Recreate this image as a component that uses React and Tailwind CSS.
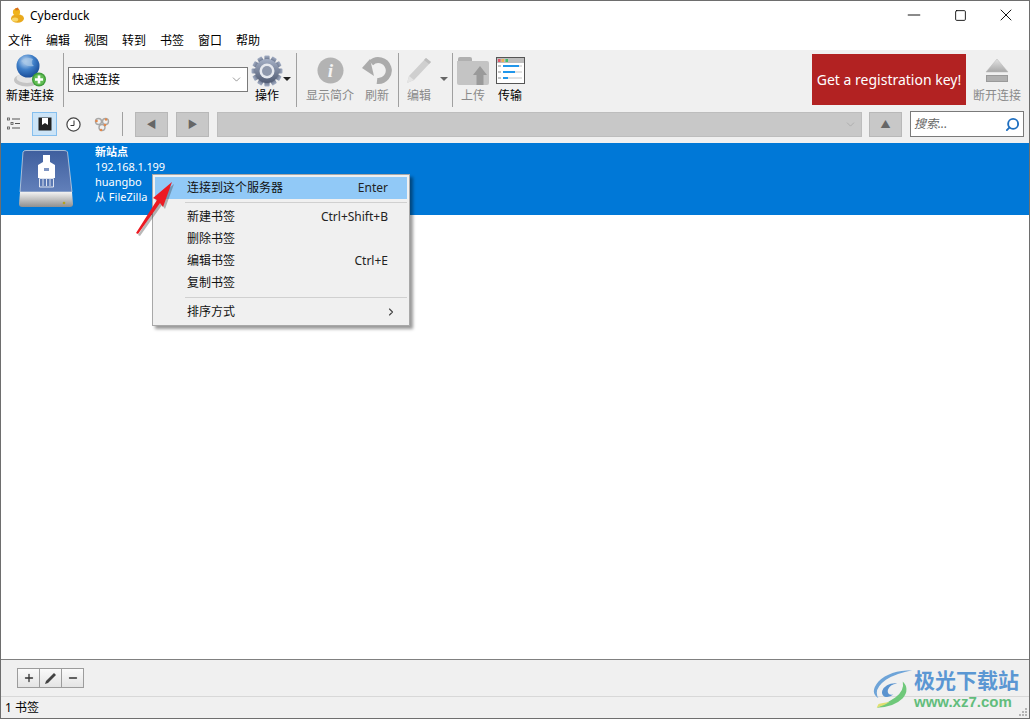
import { ChevronDown, ChevronRight, Minus, Plus, Search, Square, X } from "lucide-react";

const menus = ["文件", "编辑", "视图", "转到", "书签", "窗口", "帮助"];
const ui = "font-['Noto_Sans','Noto_Sans_CJK_SC',sans-serif]";

function Sep({ className = "" }) {
  return <div className={`h-[54px] w-px shrink-0 bg-[#a0a0a0] ${className}`} />;
}

function Duck() {
  return (
    <svg width="16" height="16" viewBox="0 0 16 16">
      <ellipse cx="8.5" cy="11.5" rx="6.5" ry="4.2" fill="#e9a91c" />
      <circle cx="7.5" cy="5" r="3.6" fill="#f0b41c" />
      <path d="M6 1.5 L9 0.5 L10 3 L6.5 3.5 Z" fill="#d9701c" />
      <ellipse cx="6" cy="12.5" rx="3.2" ry="2" fill="#f8d768" />
    </svg>
  );
}

function GlobeIcon() {
  return (
    <svg width="34" height="34" viewBox="0 0 34 34">
      <defs>
        <radialGradient id="gl" cx="0.4" cy="0.3" r="0.8">
          <stop offset="0" stopColor="#c8dff5" />
          <stop offset="0.45" stopColor="#3f7fc8" />
          <stop offset="1" stopColor="#0f3f8c" />
        </radialGradient>
      </defs>
      <ellipse cx="14" cy="26" rx="13" ry="6.5" fill="#c4c4c4" />
      <ellipse cx="14" cy="24" rx="10.5" ry="5" fill="#e4e4e4" />
      <circle cx="15" cy="12" r="11.5" fill="url(#gl)" />
      <path d="M8 7 Q14 2 20 5 Q17 9 21 12 Q14 13 12 10 Q10 8 8 7Z" fill="#a6c6e6" opacity="0.75" />
      <circle cx="26" cy="25.5" r="7" fill="#3f9c3a" />
      <circle cx="26" cy="25.5" r="5.6" fill="#62bd54" />
      <path d="M24.7 21.5h2.6v2.7H30v2.6h-2.7v2.7h-2.6v-2.7H22v-2.6h2.7z" fill="#fff" />
    </svg>
  );
}

function GearIcon() {
  const teeth = [0, 30, 60, 90, 120, 150, 180, 210, 240, 270, 300, 330];
  return (
    <svg width="32" height="32" viewBox="0 0 32 32">
      <defs>
        <linearGradient id="gr" x1="0" y1="0" x2="0" y2="1">
          <stop offset="0" stopColor="#a5b0c6" />
          <stop offset="1" stopColor="#4f5a72" />
        </linearGradient>
      </defs>
      {teeth.map((a) => (
        <rect key={a} x="13.4" y="0.5" width="5.2" height="6" rx="1" fill="url(#gr)" transform={`rotate(${a} 16 16)`} />
      ))}
      <circle cx="16" cy="16" r="12" fill="url(#gr)" />
      <circle cx="16" cy="16" r="7.5" fill="#e6e9ef" />
      <circle cx="16" cy="16" r="5" fill="#8e98ac" />
    </svg>
  );
}

function InfoIcon() {
  return (
    <svg width="27" height="27" viewBox="0 0 28 28">
      <circle cx="14" cy="14" r="13.5" fill="#b3b3b3" />
      <text x="14" y="21" textAnchor="middle" fontSize="20" fontStyle="italic" fontWeight="700" fontFamily="Liberation Serif, serif" fill="#f4f4f4">i</text>
    </svg>
  );
}

function RefreshIcon() {
  return (
    <svg width="30" height="29" viewBox="0 0 30 29" fill="none">
      <path d="M9 7 A10.5 10.5 0 1 1 15 25" stroke="#ababab" strokeWidth="6" />
      <path d="M0 12 L8 3 L12 20 Z" fill="#ababab" />
    </svg>
  );
}

function PencilIcon() {
  return (
    <svg width="28" height="28" viewBox="0 0 28 28">
      <path d="M21 1 L26 5 L9 23 L2 26 L4 19 Z" fill="#cfcfcf" />
      <path d="M21 1 L26 5 L24 7 L19 3 Z" fill="#bdbdbd" />
      <path d="M4 19 L9 23 L2 26 Z" fill="#e4e4e4" />
    </svg>
  );
}

function UploadIcon() {
  return (
    <svg width="32" height="28" viewBox="0 0 32 28">
      <path d="M1 2 Q1 0 3 0 H13 Q15 0 15 2 V4 H1 Z" fill="#b0b0b0" />
      <path d="M0 4 H30 Q32 4 32 6 V26 Q32 28 30 28 H2 Q0 28 0 26 Z" fill="#c4c4c4" />
      <path d="M23 9 L30 18 H26.5 V28 H19.5 V18 H16 Z" fill="#9a9a9a" />
    </svg>
  );
}

function TransferIcon() {
  return (
    <svg width="29" height="27" viewBox="0 0 29 27">
      <rect x="0.5" y="0.5" width="28" height="26" fill="#fff" stroke="#555" />
      <rect x="1" y="1" width="27" height="5" fill="#bdbdbd" />
      <rect x="2" y="2" width="2.5" height="3" fill="#e0566a" />
      <rect x="5.5" y="2" width="2.5" height="3" fill="#f0ae55" />
      <rect x="9.5" y="2" width="2.5" height="3" fill="#3fc06a" />
      {[[8, 16], [14, 12], [20, 5]].map(([y, w]) => (
        <g key={y}>
          <rect x="2" y={y} width="3" height="2" fill="#c4c4c4" />
          <rect x="7" y={y} width="19" height="2" fill="#e2e2e2" />
          <rect x="7" y={y} width={w} height="2" fill="#2196ea" />
        </g>
      ))}
    </svg>
  );
}

function EjectIcon() {
  return (
    <svg width="24" height="26" viewBox="0 0 24 26">
      <defs>
        <linearGradient id="ej" x1="0" y1="0" x2="0" y2="1">
          <stop offset="0" stopColor="#e2e2e2" />
          <stop offset="1" stopColor="#a8a8a8" />
        </linearGradient>
      </defs>
      <path d="M12 1 L23 14 H1 Z" fill="url(#ej)" stroke="#b8b8b8" strokeWidth="0.5" />
      <rect x="1.5" y="17.5" width="21" height="6" fill="#b0b0b0" stroke="#9a9a9a" />
    </svg>
  );
}

function OutlineIcon() {
  return (
    <svg width="14" height="14" viewBox="0 0 14 14" fill="#555">
      <rect x="0.5" y="1" width="2" height="2" fill="none" stroke="#555" strokeWidth="0.8" />
      <rect x="4" y="5.5" width="2" height="2" fill="none" stroke="#555" strokeWidth="0.8" />
      <rect x="0.5" y="10" width="2" height="2" fill="none" stroke="#555" strokeWidth="0.8" />
      <rect x="5" y="1.5" width="8" height="1" />
      <rect x="8" y="6" width="5" height="1" />
      <rect x="5" y="10.5" width="8" height="1" />
    </svg>
  );
}

function BookmarkIcon() {
  return (
    <svg width="14" height="14" viewBox="0 0 14 14">
      <rect x="0.5" y="0.5" width="13" height="13" fill="#222" />
      <path d="M4 1 H10 V8 L7 6 L4 8 Z" fill="#fff" />
    </svg>
  );
}

function ClockIcon() {
  return (
    <svg width="15" height="15" viewBox="0 0 15 15">
      <circle cx="7.5" cy="7.5" r="6.6" fill="#fff" stroke="#444" strokeWidth="1.2" />
      <path d="M8 3.5 V8.5 H4.5" fill="none" stroke="#333" strokeWidth="1" />
    </svg>
  );
}

function BonjourIcon() {
  return (
    <svg width="16" height="15" viewBox="0 0 16 15" fill="none">
      <circle cx="4.5" cy="4.5" r="3" stroke="#a8a8a8" strokeWidth="1.4" />
      <circle cx="11.5" cy="4.5" r="3" stroke="#a8a8a8" strokeWidth="1.4" />
      <circle cx="8" cy="10.5" r="3" stroke="#a8a8a8" strokeWidth="1.4" />
      <circle cx="2.5" cy="4" r="1.3" fill="#e2884a" />
      <circle cx="12" cy="2.5" r="1.2" fill="#e2884a" />
      <circle cx="11" cy="8" r="1.3" fill="#e2884a" />
      <circle cx="7" cy="13" r="1.3" fill="#e2884a" />
    </svg>
  );
}

function DriveIcon() {
  return (
    <svg width="55" height="58" viewBox="0 0 55 58">
      <defs>
        <linearGradient id="dr" x1="0" y1="0" x2="0" y2="1">
          <stop offset="0" stopColor="#3f5f9e" />
          <stop offset="1" stopColor="#6280ba" />
        </linearGradient>
        <linearGradient id="ds" x1="0" y1="0" x2="0" y2="1">
          <stop offset="0" stopColor="#f2f2f2" />
          <stop offset="1" stopColor="#8f8f8f" />
        </linearGradient>
      </defs>
      <path d="M4 2 Q4.5 0.5 7 0.5 H45 Q48 0.5 48.5 2 L53 42 H1 Z" fill="url(#dr)" stroke="#c8d0de" strokeWidth="0.8" />
      <path d="M1 42 H53 L54 54 Q54 57 51 57 H3 Q0 57 0 54 Z" fill="url(#ds)" />
      <circle cx="45" cy="53" r="1.3" fill="#b5a21f" />
      <path d="M24 5 H31 V12 L36 15 V28 H19 V15 L24 12 Z" fill="#fff" />
      <rect x="25" y="18" width="5" height="3" fill="#7f95c2" />
      <path d="M20.5 28.5 H34.5 V37 H20.5 Z" fill="none" stroke="#fff" strokeWidth="0.8" />
      <path d="M24 29 V36 M27.5 29 V36 M31 29 V36" stroke="#fff" strokeWidth="0.8" />
    </svg>
  );
}

function ToolButton({ icon, label, muted = true, className = "" }) {
  return (
    <div className={`flex shrink-0 flex-col items-center ${className}`}>
      <div className="flex h-[35px] items-center justify-center">{icon}</div>
      <span className={`-mt-[1px] text-xs leading-[17px] whitespace-nowrap ${muted ? "text-[#8a8a8a]" : "text-black"}`}>{label}</span>
    </div>
  );
}

function Caret({ className = "" }) {
  return <div className={`h-0 w-0 border-x-[4px] border-t-[4px] border-x-transparent ${className}`} />;
}

function NavButton({ children }) {
  return (
    <div className="flex h-[25px] w-[33px] shrink-0 items-center justify-center border border-[#b8b8b8] bg-[#c8c8c8] text-[10px] text-[#666]">
      {children}
    </div>
  );
}

function MenuRow({ label, hint, active, arrow }) {
  return (
    <div className={`flex h-[22px] items-center justify-between pr-[19px] pl-[32px] text-xs text-[#111] ${active ? "bg-[#91c9f7]" : ""}`}>
      <span>{label}</span>
      {hint ? <span className="text-[#222]">{hint}</span> : null}
      {arrow ? <ChevronRight size={12} strokeWidth={2.2} className="-mr-[9px] text-[#444]" /> : null}
    </div>
  );
}

function ContextMenu() {
  return (
    <div className="absolute top-[173px] left-[151px] w-[258px] border border-[#a8a8a8] bg-[#f0f0f0] p-[2px] shadow-[3px_3px_3px_rgba(0,0,0,0.4)]">
      <MenuRow label="连接到这个服务器" hint="Enter" active />
      <div className="my-[3px] ml-[30px] h-px bg-[#d0d0d0]" />
      <MenuRow label="新建书签" hint="Ctrl+Shift+B" />
      <MenuRow label="删除书签" />
      <MenuRow label="编辑书签" hint="Ctrl+E" />
      <MenuRow label="复制书签" />
      <div className="my-[3px] ml-[30px] h-px bg-[#d0d0d0]" />
      <MenuRow label="排序方式" arrow />
    </div>
  );
}

function RedArrow() {
  return (
    <svg className="absolute top-[179px] left-[131px]" width="44" height="60" viewBox="0 0 44 60">
      <path d="M4 53 L25 20 L21 18 L40 2 L31 27 L28 23 L6 54 Z" fill="#333" opacity="0.35" transform="translate(2 2)" />
      <path d="M4 53 L25 20 L21 18 L40 2 L31 27 L28 23 L6 54 Z" fill="#ec1a22" />
    </svg>
  );
}

function Watermark() {
  return (
    <div className="absolute top-[667px] left-[870px] flex items-center">
      <svg width="43" height="42" viewBox="0 0 46 44" fill="none">
        <path d="M44 2 Q20 2 8 14 Q-2 26 8 32 Q2 22 16 12 Q28 5 44 2Z" fill="#6ea4d8" />
        <path d="M12 24 Q16 15 28 16 Q20 17 18 23 Q17 29 24 28 Q19 32 14 30 Q11 28 12 24Z" fill="#5a93cf" />
        <path d="M6 42 Q24 42 34 32 Q42 22 34 14 Q36 24 26 31 Q16 38 6 42Z" fill="#6fc87a" />
        <path d="M6 42 Q14 40 20 36 Q12 37 8 38Z" fill="#e0df70" />
      </svg>
      <div className="flex flex-col">
        <span className="text-[21px] leading-[25px] font-bold text-[#5b97d3]">极光下载站</span>
        <span className="font-['Liberation_Sans',sans-serif] text-[15px] leading-[17px] font-bold text-[#62bd7c]">www.xz7.com</span>
      </div>
    </div>
  );
}

function Grip() {
  const dots = [[7, 1], [4, 4], [7, 4], [1, 7], [4, 7], [7, 7]];
  return (
    <svg className="absolute right-[1px] bottom-[1px]" width="10" height="10" viewBox="0 0 10 10">
      {dots.map(([x, y]) => <rect key={`${x}-${y}`} x={x} y={y} width="2" height="2" fill="#b4b4b4" />)}
    </svg>
  );
}

export default function App() {
  return (
    <div className={`relative flex h-[719px] w-[1030px] flex-col overflow-hidden border border-[#6e6e6e] bg-white ${ui}`}>
      <div className="flex h-[28px] shrink-0 items-center bg-white pl-[8px]">
        <Duck />
        <span className="mt-[2px] ml-[5px] text-xs text-black">Cyberduck</span>
        <div className="ml-auto flex items-center text-black">
          <div className="flex h-[28px] w-[46px] items-center justify-center"><Minus size={20} strokeWidth={1.1} /></div>
          <div className="flex h-[28px] w-[46px] items-center justify-center"><Square size={13} strokeWidth={1.6} /></div>
          <div className="flex h-[28px] w-[46px] items-center justify-center"><X size={20} strokeWidth={1.1} /></div>
        </div>
      </div>

      <div className="flex h-[21px] shrink-0 items-center gap-[14px] bg-white pt-[2px] pl-[7px] text-xs text-black">
        {menus.map((m) => <span key={m}>{m}</span>)}
      </div>

      <div className="flex h-[61px] shrink-0 items-start bg-[#f0f0f0] pt-[3px] pr-[4px]">
        <ToolButton icon={<GlobeIcon />} label="新建连接" muted={false} className="w-[58px]" />
        <Sep className="ml-[4px]" />
        <div className="mt-[14px] ml-[4px] flex h-[25px] w-[180px] shrink-0 items-center justify-between border border-[#7a7a7a] bg-white pr-[4px] pl-[3px] text-xs text-black">
          快速连接
          <ChevronDown size={13} strokeWidth={1} className="text-[#444]" />
        </div>
        <div className="relative">
          <ToolButton icon={<GearIcon />} label="操作" muted={false} className="w-[38px]" />
          <Caret className="absolute top-[24px] -right-[5px] border-t-[#222]" />
        </div>
        <Sep className="ml-[10px]" />
        <ToolButton icon={<InfoIcon />} label="显示简介" className="w-[66px]" />
        <ToolButton icon={<RefreshIcon />} label="刷新" className="w-[28px]" />
        <Sep className="ml-[7px]" />
        <ToolButton icon={<PencilIcon />} label="编辑" className="w-[40px]" />
        <Caret className="mt-[24px] ml-[1px] border-t-[#666]" />
        <Sep className="ml-[4px]" />
        <ToolButton icon={<UploadIcon />} label="上传" className="w-[40px]" />
        <ToolButton icon={<TransferIcon />} label="传输" muted={false} className="w-[34px]" />
        <div className="mt-[1px] ml-auto flex h-[51px] w-[154px] items-center justify-center bg-[#b22222] text-sm whitespace-nowrap text-white">
          Get a registration key!
        </div>
        <ToolButton icon={<EjectIcon />} label="断开连接" className="ml-[3px] w-[56px]" />
      </div>

      <div className="flex h-[32px] shrink-0 items-center bg-[#f0f0f0] pr-[5px] pb-[6px]">
        <div className="ml-[6px] flex w-[14px] justify-center"><OutlineIcon /></div>
        <div className="ml-[11px] flex h-[24px] w-[25px] items-center justify-center border border-[#86bfee] bg-[#cce4f7]"><BookmarkIcon /></div>
        <div className="ml-[9px] flex w-[15px] justify-center"><ClockIcon /></div>
        <div className="ml-[13px] flex w-[16px] justify-center"><BonjourIcon /></div>
        <div className="mx-[12px] h-[24px] w-px bg-[#a0a0a0]" />
        <NavButton>◀</NavButton>
        <div className="w-[8px]" />
        <NavButton>▶</NavButton>
        <div className="ml-[8px] flex h-[25px] flex-1 items-center justify-end border border-[#bdbdbd] bg-[#c8c8c8] pr-[4px]">
          <ChevronDown size={13} strokeWidth={1} className="text-[#999]" />
        </div>
        <div className="ml-[7px]"><NavButton>▲</NavButton></div>
        <div className="ml-[8px] flex h-[26px] w-[114px] items-center justify-between border border-[#7a7a7a] bg-white pr-[3px] pl-[3px] text-xs text-[#666] italic">
          搜索...
          <Search size={15} strokeWidth={3} className="scale-x-[-1] text-[#1f6fc0]" />
        </div>
      </div>

      <div className="flex min-h-0 flex-1 flex-col bg-white">
        <div className="flex h-[72px] shrink-0 items-center bg-[#0078d7] pl-[18px] text-white">
          <DriveIcon />
          <div className="mb-[10px] ml-[21px] flex flex-col text-[11px] leading-[15px]">
            <span className="font-bold">新站点</span>
            <span className="tracking-[-0.15px]">192.168.1.199</span>
            <span>huangbo</span>
            <span>从 FileZilla</span>
          </div>
        </div>
      </div>

      <div className="flex h-[37px] shrink-0 items-center border-t border-[#808080] bg-[#f0f0f0] pl-[16px]">
        <div className="flex h-[20px] w-[67px] border border-[#9c9c9c] bg-gradient-to-b from-[#fafafa] to-[#e4e4e4] text-[#333]">
          <div className="flex flex-1 items-center justify-center border-r border-[#9c9c9c]"><Plus size={12} strokeWidth={2.6} /></div>
          <div className="flex flex-1 items-center justify-center border-r border-[#9c9c9c]">
            <svg width="13" height="13" viewBox="0 0 13 13"><path d="M10 1 L12 3 L4 11 L1 12 L2 9 Z" fill="#444" /></svg>
          </div>
          <div className="flex flex-1 items-center justify-center"><Minus size={12} strokeWidth={2.6} /></div>
        </div>
      </div>

      <div className="flex h-[22px] shrink-0 items-center border-t border-[#d8d8d8] bg-[#f0f0f0] pl-[4px] text-xs text-black">
        1 书签
      </div>

      <ContextMenu />
      <RedArrow />
      <Watermark />
      <Grip />
    </div>
  );
}
